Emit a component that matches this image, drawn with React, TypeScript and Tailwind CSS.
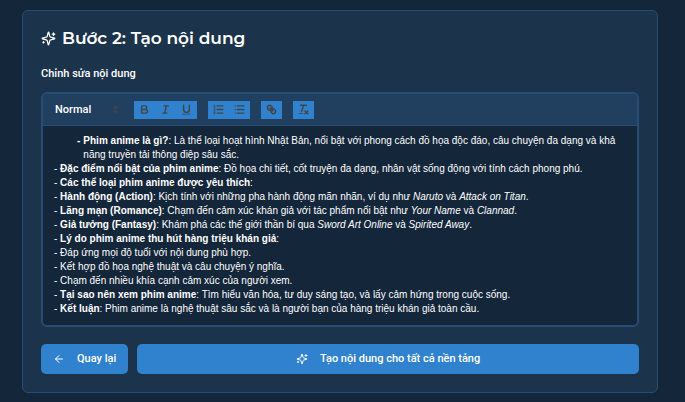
import { ReactNode } from "react";
import { ArrowLeft } from "lucide-react";

function SparkleIcon({ className }: { className: string }) {
  return (
    <svg viewBox="0 0 24 24" fill="none" stroke="currentColor" strokeWidth="2" strokeLinecap="round" strokeLinejoin="round" className={className} aria-hidden="true">
      <path d="M9.937 15.5A2 2 0 0 0 8.5 14.063l-6.135-1.582a.5.5 0 0 1 0-.962L8.500 9.936A2 2 0 0 0 9.937 8.500l1.582-6.135a.5.5 0 0 1 .963 0L14.063 8.500A2 2 0 0 0 15.500 9.937l6.135 1.581a.5.5 0 0 1 0 .964L15.500 14.063a2 2 0 0 0-1.437 1.437l-1.582 6.135a.5.5 0 0 1-.963 0z" />
      <path d="M20 3v4M22 5h-4M4 17v2M5 18H3" />
    </svg>
  );
}

function ToolIcon({ children }: { children: ReactNode }) {
  return (
    <svg viewBox="0 0 18 18" fill="none" stroke="#444" strokeWidth="2" strokeLinecap="round" strokeLinejoin="round" className="h-[13px] w-[13px]" aria-hidden="true">
      {children}
    </svg>
  );
}

function ToolButton({ label, children }: { label: string; children: ReactNode }) {
  return (
    <button type="button" aria-label={label} className="flex h-[18px] w-[21px] items-center justify-center bg-[#3182ce]">
      <ToolIcon>{children}</ToolIcon>
    </button>
  );
}

const lines: { bold?: string; text?: ReactNode }[] = [
  { bold: "Đặc điểm nổi bật của phim anime", text: ": Đồ họa chi tiết, cốt truyện đa dạng, nhân vật sống động với tính cách phong phú." },
  { bold: "Các thể loại phim anime được yêu thích", text: ":" },
  { bold: "Hành động (Action)", text: <>: Kịch tính với những pha hành động mãn nhãn, ví dụ như <em>Naruto</em> và <em>Attack on Titan</em>.</> },
  { bold: "Lãng mạn (Romance)", text: <>: Chạm đến cảm xúc khán giả với tác phẩm nổi bật như <em>Your Name</em> và <em>Clannad</em>.</> },
  { bold: "Giả tưởng (Fantasy)", text: <>: Khám phá các thế giới thần bí qua <em>Sword Art Online</em> và <em>Spirited Away</em>.</> },
  { bold: "Lý do phim anime thu hút hàng triệu khán giả", text: ":" },
  { text: "Đáp ứng mọi độ tuổi với nội dung phù hợp." },
  { text: "Kết hợp đồ họa nghệ thuật và câu chuyện ý nghĩa." },
  { text: "Chạm đến nhiều khía cạnh cảm xúc của người xem." },
  { bold: "Tại sao nên xem phim anime", text: ": Tìm hiểu văn hóa, tư duy sáng tạo, và lấy cảm hứng trong cuộc sống." },
  { bold: "Kết luận", text: ": Phim anime là nghệ thuật sâu sắc và là người bạn của hàng triệu khán giả toàn cầu." },
];

function Toolbar() {
  return (
    <div role="toolbar" className="flex h-8 items-center border-b border-[#274d75] bg-[#21405f] pl-3">
      <div className="relative flex w-[79px] items-center">
        <select aria-label="Kiểu chữ" className="w-full appearance-none bg-transparent text-[11px] leading-4 font-medium outline-none">
          <option>Normal</option>
        </select>
        <svg viewBox="0 0 18 18" fill="#444" stroke="#444" strokeWidth="2" strokeLinejoin="round" className="pointer-events-none absolute right-3 h-[13px] w-[13px]" aria-hidden="true">
          <path d="M7 11 9 13 11 11zM7 7 9 5 11 7z" />
        </svg>
      </div>
      <div className="flex gap-[11px]">
        <div className="flex">
          <ToolButton label="Đậm">
            <path d="M5 4h4.5a2.5 2.5 0 0 1 0 5H5zM5 9h5.5a2.5 2.5 0 0 1 0 5H5z" />
          </ToolButton>
          <ToolButton label="Nghiêng">
            <path d="M7 4h6M5 14h6M8 14l2-10" />
          </ToolButton>
          <ToolButton label="Gạch chân">
            <path d="M5 3v6a4 4 0 0 0 8 0V3" />
            <rect x="3" y="15" width="12" height="1" rx="0.5" fill="#444" stroke="none" />
          </ToolButton>
        </div>
        <div className="flex">
          <ToolButton label="Danh sách số">
            <path d="M7 4h8M7 9h8M7 14h8" />
            <path strokeWidth="1" d="M2.500 5.500h2M3.500 5.500v-3l-1 .5M4.500 10.500h-2c0-.2 1.850-1.100 1.850-2.200a.96.96 0 0 0-1.850-.3M2.500 14.700a1.400 1.400 0 0 0 1.100.3.700.7 0 0 0 0-1.500.700.7 0 0 0 0-1.400 1.400 1.400 0 0 0-1.100.3" />
          </ToolButton>
          <ToolButton label="Danh sách">
            <path d="M6 4h9M6 9h9M6 14h9M3 4h0M3 9h0M3 14h0" />
          </ToolButton>
        </div>
        <ToolButton label="Liên kết">
          <path d="M7 7l4 4" />
          <path d="M8.900 4.577a3.476 3.476 0 0 1 .36 4.679A3.476 3.476 0 0 1 4.577 8.900C3.185 7.500 2.035 6.400 4.217 4.217S7.500 3.185 8.900 4.577Z" />
          <path d="M13.423 9.100a3.476 3.476 0 0 0-4.679-.36 3.476 3.476 0 0 0 .36 4.679c1.392 1.392 2.500 2.542 4.679.36S14.815 10.500 13.423 9.100Z" />
        </ToolButton>
        <ToolButton label="Xóa định dạng">
          <path d="M5 3h8M6 12l3.350-9M11 11l4 4M15 11l-4 4" />
          <rect x="2" y="14" width="7" height="1" rx="0.5" fill="#444" stroke="none" />
        </ToolButton>
      </div>
    </div>
  );
}

export default function App() {
  return (
    <main className="min-h-screen bg-[#14263a] px-[22px] py-[10px] font-[Roboto,'Noto_Sans',sans-serif] text-white">
      <section className="mr-[5px] rounded-md border border-[#274d75] bg-[#1b344c] px-[18px] pt-[14px] pb-[18px]">
        <h2 className="flex items-center gap-[6px] font-[Montserrat,'Open_Sans',sans-serif] text-[17px] leading-[26px] font-semibold">
          <SparkleIcon className="h-[15px] w-[15px]" />
          Bước 2: Tạo nội dung
        </h2>
        <p id="editor-label" className="mt-[15px] text-[11px] leading-4 font-medium">
          Chỉnh sửa nội dung
        </p>
        <div className="mt-[10px] overflow-hidden rounded-md border-2 border-[#274d75]">
          <Toolbar />
          <div
            role="textbox"
            aria-multiline="true"
            aria-labelledby="editor-label"
            contentEditable
            suppressContentEditableWarning
            className="bg-[#14263a] px-[11px] pt-2 pb-[9px] font-['Liberation_Sans',Arial,sans-serif] text-[10px] leading-[14px] outline-none"
          >
            <ul className="pl-[23px]">
              <li className="flex gap-[3px]">
                <strong>-</strong>
                <div>
                  <strong>Phim anime là gì?</strong>: Là thể loại hoạt hình Nhật Bản, nổi bật với phong cách đồ họa độc đáo, câu chuyện đa dạng và khả năng truyền tải thông điệp sâu sắc.
                </div>
              </li>
            </ul>
            {lines.map((line, i) => (
              <p key={i}>
                - {line.bold && <strong>{line.bold}</strong>}
                {line.text}
              </p>
            ))}
          </div>
        </div>
        <div className="mt-[17px] flex gap-[9px] text-[11px] font-medium">
          <button type="button" className="flex h-[30px] items-center gap-3 rounded-[5px] bg-[#3182ce] px-3">
            <ArrowLeft className="h-3 w-3" />
            Quay lại
          </button>
          <button type="button" className="flex h-[30px] flex-1 items-center justify-center gap-3 rounded-[5px] bg-[#3182ce]">
            <SparkleIcon className="h-3 w-3" />
            Tạo nội dung cho tất cả nền tảng
          </button>
        </div>
      </section>
    </main>
  );
}
